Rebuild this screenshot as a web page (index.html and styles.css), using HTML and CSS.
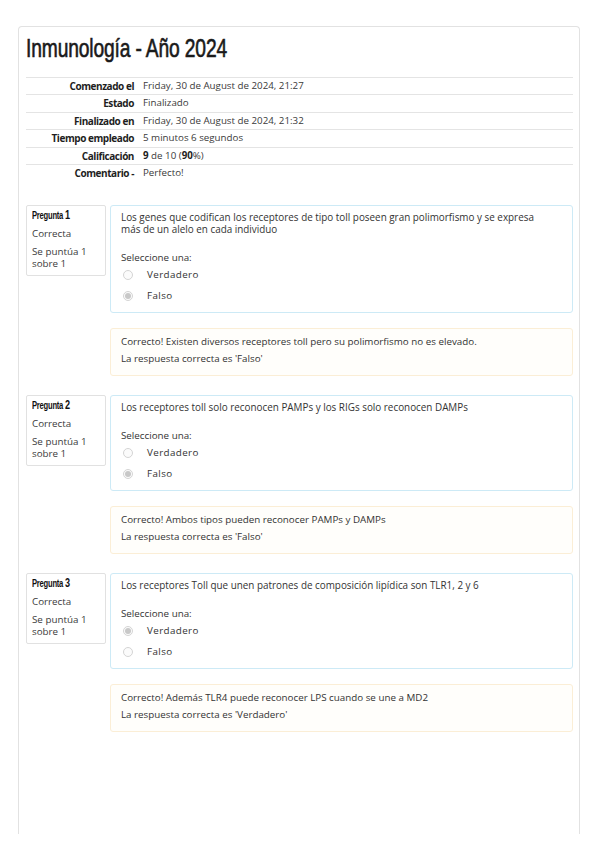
FILE: index.html
```html
<!DOCTYPE html>
<html lang="es">
<head>
<meta charset="utf-8">
<title>Inmunología - Año 2024</title>
<link rel="stylesheet" href="styles.css">
</head>
<body>
<div class="card">
  <h1 class="title"><span class="narrow">Inmunología - Año 2024</span></h1>
  <table class="summary">
    <tr><th>Comenzado el</th><td>Friday, 30 de August de 2024, 21:27</td></tr>
    <tr><th>Estado</th><td>Finalizado</td></tr>
    <tr><th>Finalizado en</th><td>Friday, 30 de August de 2024, 21:32</td></tr>
    <tr><th>Tiempo empleado</th><td>5 minutos 6 segundos</td></tr>
    <tr><th>Calificación</th><td><b>9</b> de 10 (<b>90</b>%)</td></tr>
    <tr><th>Comentario -</th><td>Perfecto!</td></tr>
  </table>

  <div class="question">
    <div class="info">
      <div class="qno"><span class="narrow">Pregunta <span class="num">1</span></span></div>
      <div class="state">Correcta</div>
      <div class="grade">Se puntúa 1 sobre 1</div>
    </div>
    <div class="qbody">
      <div class="content">
        <div class="qtext">Los genes que codifican los receptores de tipo toll poseen gran polimorfismo y se expresa más de un alelo en cada individuo</div>
        <div class="prompt">Seleccione una:</div>
        <div class="opt"><span class="radio"></span><span class="lbl">Verdadero</span></div>
        <div class="opt"><span class="radio checked"></span><span class="lbl">Falso</span></div>
      </div>
      <div class="feedback">
        <div class="fb">Correcto! Existen diversos receptores toll pero su polimorfismo no es elevado.</div>
        <div class="fb">La respuesta correcta es 'Falso'</div>
      </div>
    </div>
  </div>

  <div class="question">
    <div class="info">
      <div class="qno"><span class="narrow">Pregunta <span class="num">2</span></span></div>
      <div class="state">Correcta</div>
      <div class="grade">Se puntúa 1 sobre 1</div>
    </div>
    <div class="qbody">
      <div class="content">
        <div class="qtext">Los receptores toll solo reconocen PAMPs y los RIGs solo reconocen DAMPs</div>
        <div class="prompt">Seleccione una:</div>
        <div class="opt"><span class="radio"></span><span class="lbl">Verdadero</span></div>
        <div class="opt"><span class="radio checked"></span><span class="lbl">Falso</span></div>
      </div>
      <div class="feedback">
        <div class="fb">Correcto! Ambos tipos pueden reconocer PAMPs y DAMPs</div>
        <div class="fb">La respuesta correcta es 'Falso'</div>
      </div>
    </div>
  </div>

  <div class="question">
    <div class="info">
      <div class="qno"><span class="narrow">Pregunta <span class="num">3</span></span></div>
      <div class="state">Correcta</div>
      <div class="grade">Se puntúa 1 sobre 1</div>
    </div>
    <div class="qbody">
      <div class="content">
        <div class="qtext">Los receptores Toll que unen patrones de composición lipídica son TLR1, 2 y 6</div>
        <div class="prompt">Seleccione una:</div>
        <div class="opt"><span class="radio checked"></span><span class="lbl">Verdadero</span></div>
        <div class="opt"><span class="radio"></span><span class="lbl">Falso</span></div>
      </div>
      <div class="feedback">
        <div class="fb">Correcto! Además TLR4 puede reconocer LPS cuando se une a MD2</div>
        <div class="fb">La respuesta correcta es 'Verdadero'</div>
      </div>
    </div>
  </div>
</div>
</body>
</html>
```

FILE: styles.css
```css
html, body {
  margin: 0;
  padding: 0;
  background: #ffffff;
}
body {
  font-family: "Open Sans", "Noto Sans", sans-serif;
  color: #333333;
  font-size: 9.8px;
}
.card {
  box-sizing: border-box;
  margin: 26px 0 0 18px;
  width: 562px;
  height: 808px;
  border: 1px solid #e2e2e2;
  border-bottom: none;
  border-radius: 4px 4px 0 0;
  padding: 0 6px 0 7px;
}
.narrow {
  display: inline-block;
  transform-origin: left center;
}
.title {
  margin: 0;
  padding-top: 8px;
  height: 42px;
  font-family: "Liberation Sans", "Arimo", sans-serif;
  font-weight: normal;
  font-size: 25px;
  line-height: 26px;
  color: #1a1a1a;
}
.title .narrow {
  transform: scaleX(0.77);
  letter-spacing: -0.2px;
  -webkit-text-stroke: 0.6px #1a1a1a;
}
.summary {
  width: 100%;
  border-collapse: collapse;
  margin-bottom: 24px;
}
.summary tr {
  border-top: 1px solid #e4e4e4;
}
.summary th {
  width: 108px;
  text-align: right;
  font-weight: 700;
  font-size: 10px;
  letter-spacing: -0.45px;
  color: #1e1e1e;
  padding: 2px 9px 2px 0;
  line-height: 12.4px;
  white-space: nowrap;
}
.summary td {
  padding: 2px 0;
  font-size: 9.75px;
  line-height: 12.4px;
  color: #3a3a3a;
}
.summary td b {
  font-weight: 700;
  color: #222;
}
.question {
  display: flex;
  gap: 4px;
  margin-bottom: 19px;
}
.info {
  box-sizing: border-box;
  width: 80px;
  flex: none;
  align-self: flex-start;
  border: 1px solid #e1e1e1;
  border-radius: 2px;
  background: #ffffff;
  padding: 3px 5px 5px 5px;
  color: #3a3a3a;
}
.qno {
  font-family: "Liberation Sans", "Arimo", sans-serif;
  font-weight: bold;
  font-size: 10px;
  line-height: 13px;
  color: #111;
}
.qno .narrow {
  transform: scaleX(0.76);
  letter-spacing: -0.3px;
}
.qno .num {
  font-size: 12px;
}
.state {
  margin-top: 5px;
  line-height: 13px;
}
.grade {
  margin-top: 6px;
  line-height: 12px;
}
.qbody {
  flex: 1;
  min-width: 0;
}
.content {
  border: 1px solid #cdeaf6;
  border-radius: 3px;
  padding: 5px 10px 6px 10px;
  background: #ffffff;
}
.qtext {
  font-size: 9.9px;
  line-height: 12px;
  color: #333;
  margin-right: 22px;
}
.prompt {
  margin-top: 17px;
  line-height: 12px;
}
.opt {
  display: flex;
  align-items: center;
  height: 21px;
  padding-left: 2px;
}
.radio {
  box-sizing: border-box;
  width: 10px;
  height: 10px;
  border-radius: 50%;
  border: 1px solid #d4d4d4;
  background: #fbfbfb;
  margin-right: 14px;
  display: inline-flex;
  align-items: center;
  justify-content: center;
}
.radio.checked::after {
  content: "";
  width: 6px;
  height: 6px;
  border-radius: 50%;
  background: #c8c8c8;
}
.lbl {
  font-size: 9.8px;
  letter-spacing: 0.4px;
}
.feedback {
  margin-top: 15px;
  border: 1px solid #fbeed6;
  border-radius: 3px;
  background: #fffefb;
  padding: 4px 10px 8px 10px;
}
.fb {
  line-height: 17px;
  font-size: 9.8px;
}
```
